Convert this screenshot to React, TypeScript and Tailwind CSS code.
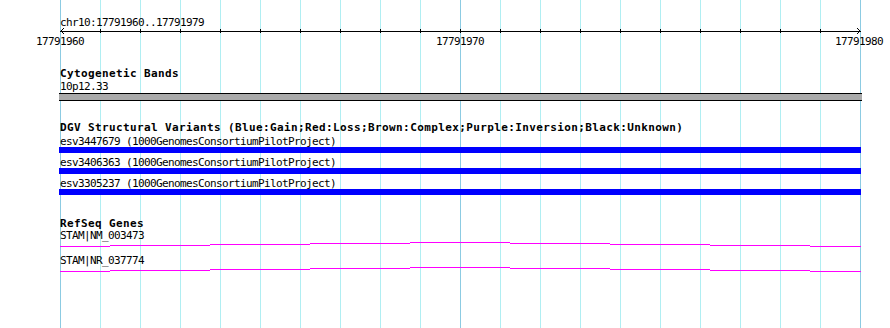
import React from "react";

// grid every 40px, darker at the major ticks
const gridXs = Array.from({ length: 21 }, (_, i) => 60 + i * 40);
const majorXs = [60, 460, 860];

// stepped transcript line: [x1, x2, y offset]
const geneSteps: [number, number, number][] = [
  [60, 110, 5],
  [110, 210, 4],
  [210, 310, 3],
  [310, 410, 2],
  [410, 510, 1],
  [510, 610, 2],
  [610, 710, 3],
  [710, 810, 4],
  [810, 861, 5],
];

const variants = ["esv3447679", "esv3406363", "esv3305237"];

function Grid() {
  return (
    <svg
      className="absolute inset-0"
      width={890}
      height={328}
      shapeRendering="crispEdges"
    >
      {gridXs.map((x) => (
        <rect
          key={x}
          x={x}
          y={0}
          width={1}
          height={328}
          fill={majorXs.includes(x) ? "#8ccbe2" : "#b0eef2"}
        />
      ))}
    </svg>
  );
}

function Ruler() {
  const ticks = gridXs.filter((x) => x !== 60 && x !== 860);
  return (
    <svg width={890} height={10} shapeRendering="crispEdges" className="block">
      <rect x={60} y={5} width={801} height={1} fill="#000" />
      {ticks.map((x) => (
        <rect key={x} x={x} y={3} width={1} height={4} fill="#000" />
      ))}
      <path d="M64 2 L61 5 L64 8 M857 2 L860 5 L857 8" stroke="#000" strokeWidth={1} fill="none" />
    </svg>
  );
}

function GeneLine() {
  return (
    <svg width={890} height={6} shapeRendering="crispEdges" className="block">
      {geneSteps.map(([x1, x2, y]) => (
        <rect key={x1} x={x1} y={y} width={x2 - x1} height={1} fill="#ff00ff" />
      ))}
    </svg>
  );
}

const small = "h-[13px] leading-[13px] text-[11px] tracking-[-0.62px] whitespace-nowrap";
const bold = "h-[13px] leading-[13px] text-[11px] font-bold tracking-[0.38px] whitespace-nowrap";

export default function App() {
  return (
    <div className="relative w-[890px] h-[328px] overflow-hidden bg-white text-black font-['DejaVu_Sans_Mono','Liberation_Mono',monospace]">
      <Grid />

      <div className="relative flex flex-col">
        {/* ruler */}
        <div className={`${small} mt-[16px] ml-[60px] -mb-[3px]`}>chr10:17791960..17791979</div>
        <Ruler />
        <div className={`${small} flex -mt-[1px]`}>
          <span className="ml-[36px]">17791960</span>
          <span className="ml-[352px]">17791970</span>
          <span className="ml-[351px]">17791980</span>
        </div>

        {/* cytogenetic bands */}
        <div className={`${bold} mt-[19px] ml-[60px]`}>Cytogenetic Bands</div>
        <div className={`${small} ml-[60px]`}>10p12.33</div>
        <div className="ml-[59px] w-[803px] h-[8px] border-y border-black bg-[#aaaaaa]" />

        {/* DGV */}
        <div className={`${bold} mt-[20px] ml-[60px]`}>
          DGV Structural Variants (Blue:Gain;Red:Loss;Brown:Complex;Purple:Inversion;Black:Unknown)
        </div>
        {variants.map((v, i) => (
          <div key={v} className={i === 0 ? "mt-[1px]" : "mt-[3px]"}>
            <div className={`${small} !h-[12px] ml-[60px]`}>
              {v} (1000GenomesConsortiumPilotProject)
            </div>
            <div className="ml-[59px] w-[802px] h-[6px] bg-[#0000ff]" />
          </div>
        ))}

        {/* RefSeq */}
        <div className={`${bold} mt-[22px] ml-[60px]`}>RefSeq Genes</div>
        <div className="-mt-[1px]">
          <div className={`${small} !h-[12px] ml-[60px]`}>STAM|NM_003473</div>
          <GeneLine />
        </div>
        <div className="mt-[7px]">
          <div className={`${small} !h-[12px] ml-[60px]`}>STAM|NR_037774</div>
          <GeneLine />
        </div>
      </div>
    </div>
  );
}
